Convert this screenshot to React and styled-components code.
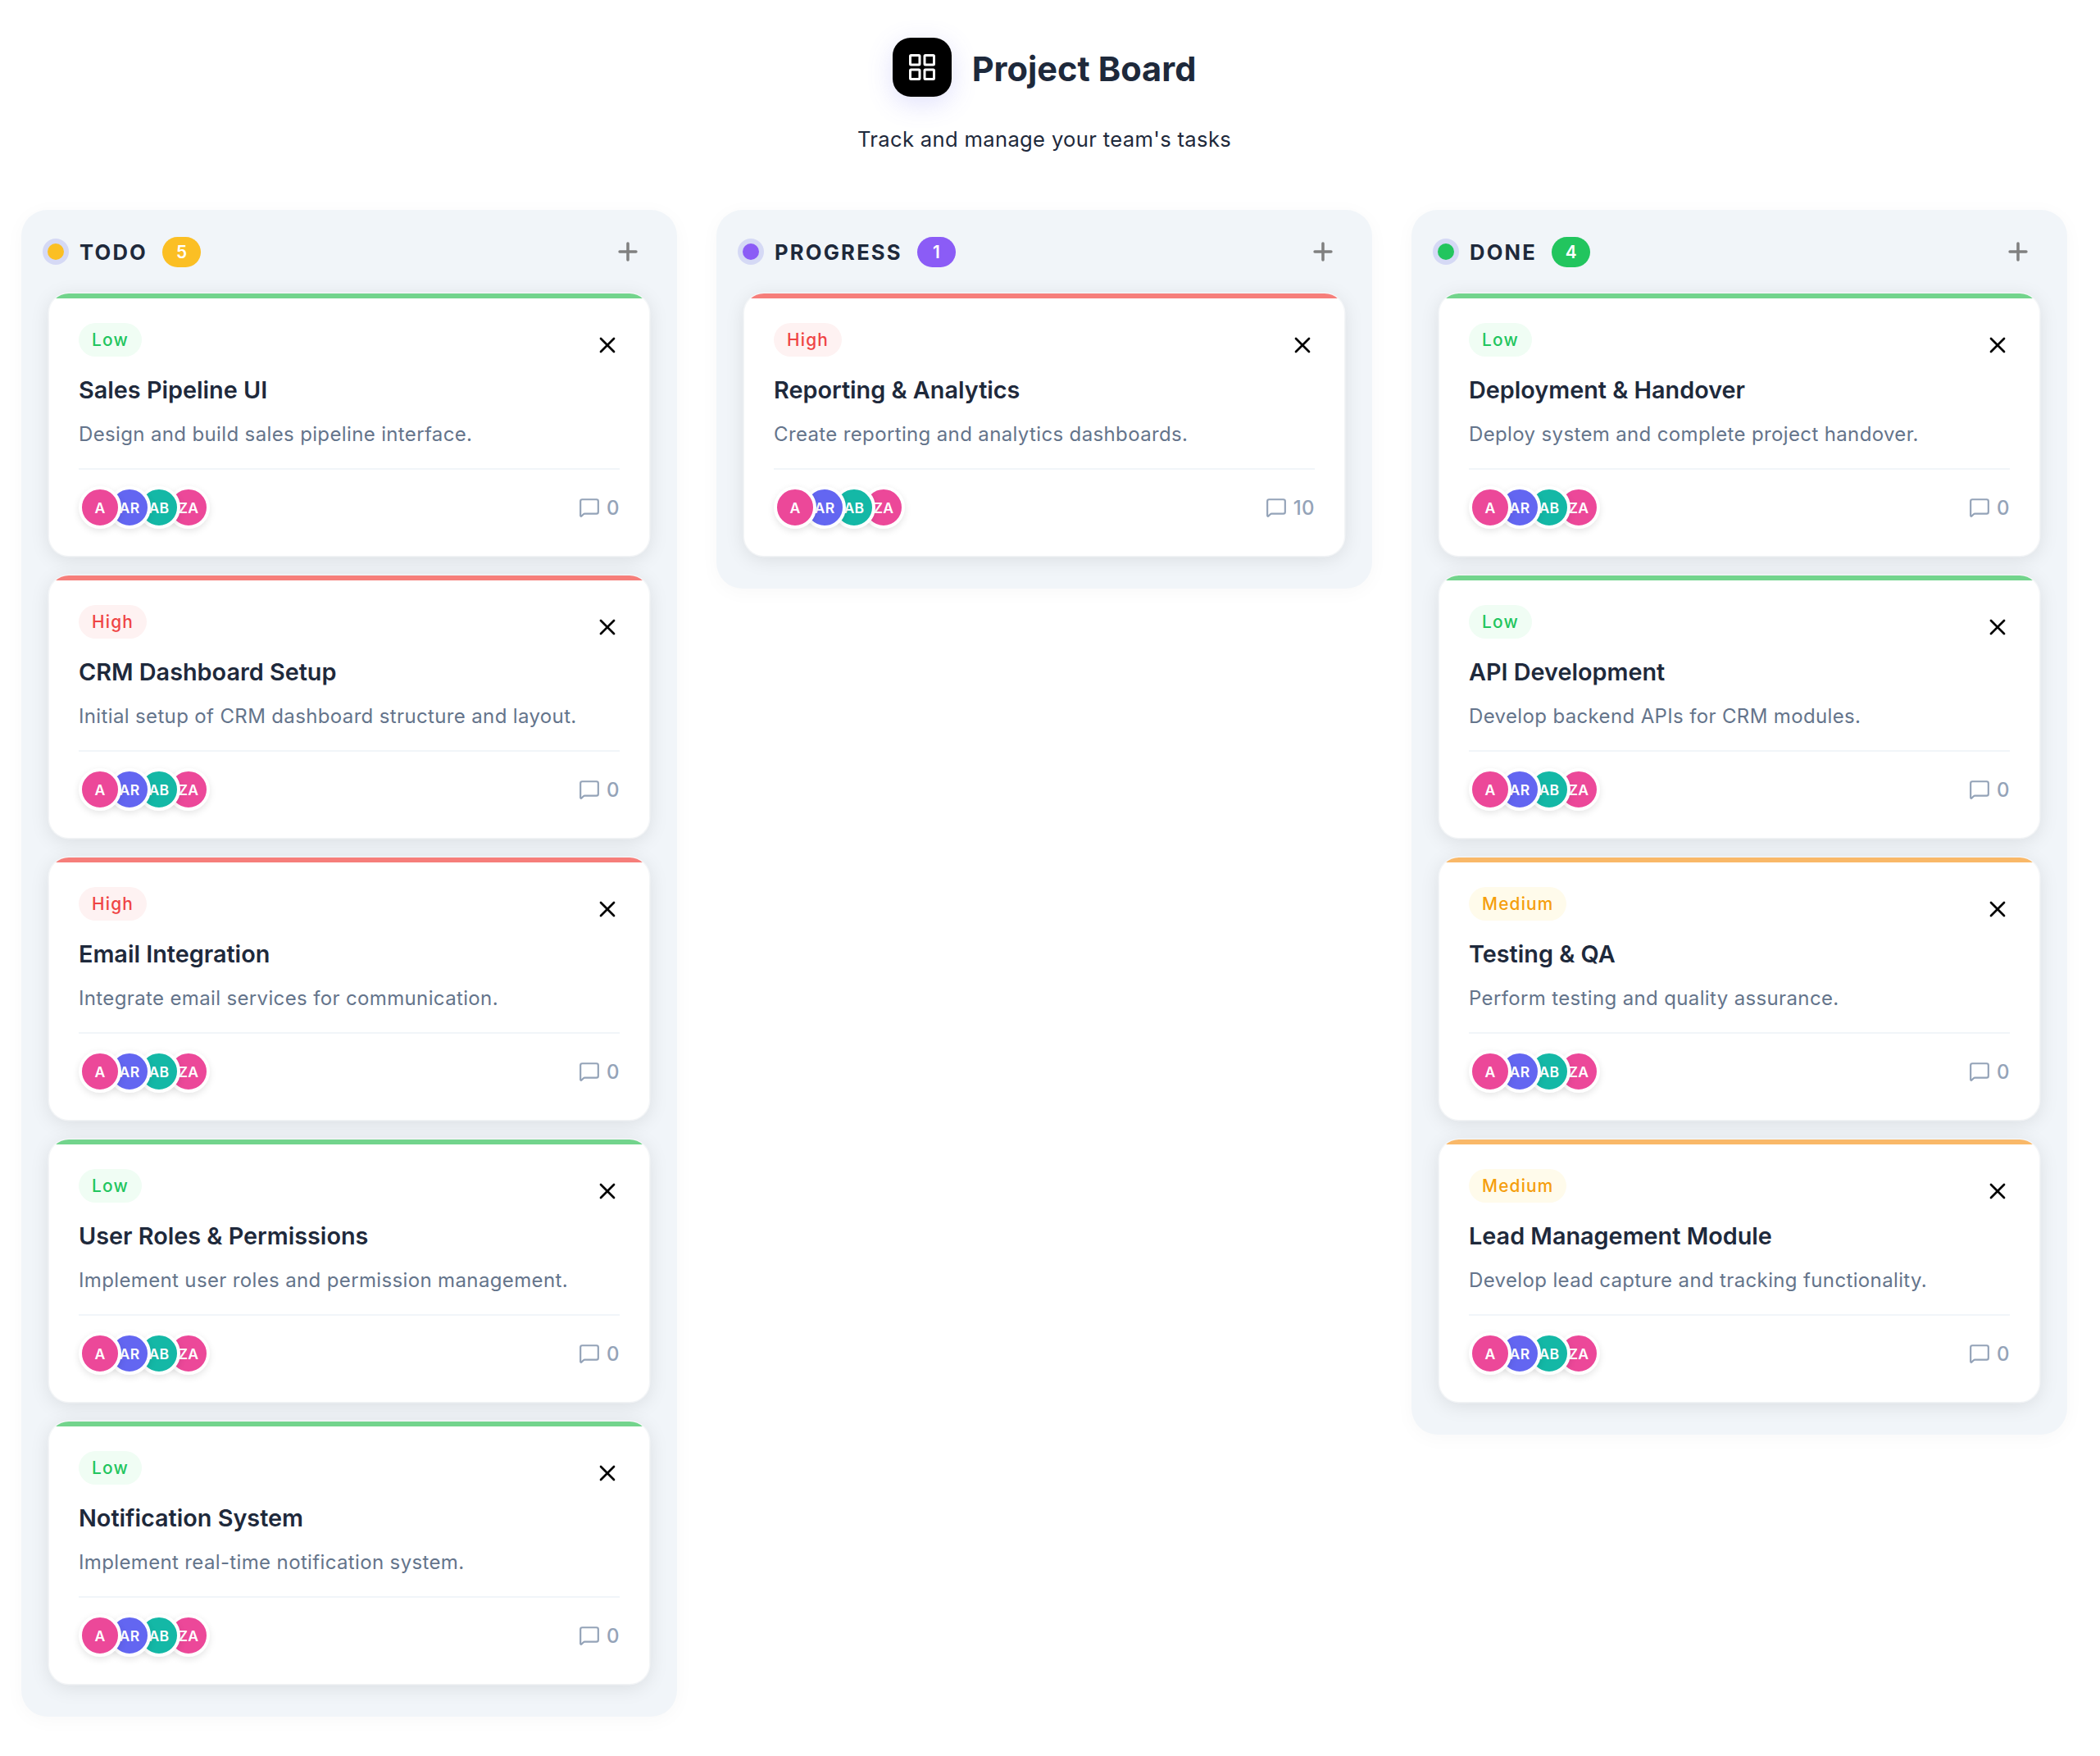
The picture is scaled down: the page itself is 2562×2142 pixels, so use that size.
import React from "react";
import styled, { createGlobalStyle } from "styled-components";
import { Plus, X, MessageSquare } from "lucide-react";

const Global = createGlobalStyle`
  html, body { margin: 0; padding: 0; background: #fff; }
  body { font-family: Inter, "Liberation Sans", sans-serif; }
`;

const Page = styled.div`
  width: 2562px;
  min-height: 2142px;
  box-sizing: border-box;
  padding: 46px 40px 0 26px;
`;

const Header = styled.header`
  display: flex;
  flex-direction: column;
  align-items: center;
  margin-bottom: 67px;
`;

const TitleRow = styled.div`
  display: flex;
  align-items: center;
  gap: 25px;
`;

const Logo = styled.div`
  width: 72px;
  height: 72px;
  border-radius: 22px;
  background: #000;
  color: #fff;
  display: flex;
  align-items: center;
  justify-content: center;
  box-shadow: 0 8px 32px rgba(99, 102, 241, 0.2);
`;

const Title = styled.h1`
  margin: 3px 0 0;
  font-size: 41.6px;
  line-height: 50px;
  font-weight: 700;
  color: #1e293b;
`;

const Subtitle = styled.p`
  margin: 33px 0 0;
  font-size: 25.6px;
  line-height: 38px;
  letter-spacing: 0.33px;
  color: #1e293b;
`;

const Board = styled.main`
  display: grid;
  grid-template-columns: repeat(3, 800px);
  gap: 48px;
  align-items: start;
`;

const Column = styled.section`
  background: #f1f5f9;
  border-radius: 32px;
  padding: 32px 34px 40px;
  box-shadow: 0 4px 24px rgba(0, 0, 0, 0.03);
`;

const ColumnHeader = styled.div`
  display: flex;
  align-items: center;
  height: 38px;
  margin-bottom: 32px;
  margin-left: -8px;
`;

const Dot = styled.span`
  width: 20px;
  height: 20px;
  border-radius: 50%;
  background: ${(p) => p.$color};
  box-shadow: 0 0 0 6px #d5d9f5;
  margin-left: 6px;
`;

const ColumnName = styled.h2`
  margin: 0 18px 0 19px;
  font-size: 25.6px;
  font-weight: 700;
  letter-spacing: 2.2px;
  color: #1e293b;
`;

const Count = styled.span`
  min-width: 47px;
  height: 37px;
  box-sizing: border-box;
  padding: 0 16px;
  border-radius: 19px;
  background: ${(p) => p.$color};
  color: #fff;
  font-size: 20.8px;
  font-weight: 600;
  display: flex;
  align-items: center;
  justify-content: center;
`;

const AddButton = styled.button`
  margin-left: auto;
  margin-right: 9px;
  padding: 0;
  width: 34px;
  height: 34px;
  border: 0;
  background: none;
  color: #808080;
  display: flex;
`;

const Cards = styled.div`
  display: flex;
  flex-direction: column;
  gap: 24px;
`;

const Card = styled.article`
  position: relative;
  overflow: hidden;
  height: 320px;
  box-sizing: border-box;
  background: #fff;
  border-radius: 24px;
  padding: 36px 36px 0;
  box-shadow: 0 0 0 1.5px rgba(255, 255, 255, 0.5), 0 4px 24px rgba(0, 0, 0, 0.1);
  display: flex;
  flex-direction: column;
  &::before {
    content: "";
    position: absolute;
    top: 0;
    left: 0;
    right: 0;
    height: 6px;
    background: ${(p) => p.$accent};
  }
`;

const CardTop = styled.div`
  display: flex;
  justify-content: space-between;
  align-items: flex-start;
  height: 43px;
`;

const Priority = styled.span`
  height: 41px;
  box-sizing: border-box;
  padding: 0 16px;
  border-radius: 21px;
  background: ${(p) => p.$bg};
  color: ${(p) => p.$color};
  font-size: 20.8px;
  font-weight: 500;
  letter-spacing: 1.2px;
  display: flex;
  align-items: center;
`;

const CloseButton = styled.button`
  margin: 11px -1px 0 0;
  padding: 0;
  width: 32px;
  height: 32px;
  border: 0;
  background: none;
  color: #000;
  display: flex;
`;

const CardTitle = styled.h3`
  margin: 21px 0 0;
  font-size: 28.8px;
  line-height: 36px;
  font-weight: 600;
  color: #1e293b;
`;

const CardText = styled.p`
  margin: 18px 0 0;
  font-size: 24px;
  line-height: 36px;
  letter-spacing: 0.36px;
  color: #64748b;
`;

const CardFooter = styled.div`
  margin-top: 23px;
  padding-top: 20px;
  border-top: 2px solid #f1f5f9;
  display: flex;
  align-items: center;
  justify-content: space-between;
`;

const Avatars = styled.div`
  display: flex;
`;

const Avatar = styled.span`
  width: 44px;
  height: 44px;
  border: 4px solid #fff;
  border-radius: 50%;
  background: ${(p) => p.$color};
  color: #fff;
  font-size: 17.6px;
  font-weight: 600;
  letter-spacing: 0.4px;
  display: flex;
  align-items: center;
  justify-content: center;
  box-shadow: 0 3px 8px rgba(0, 0, 0, 0.1);
  position: relative;
  z-index: ${(p) => p.$z};
  & + & { margin-left: -16px; }
`;

const Comments = styled.div`
  display: flex;
  align-items: center;
  gap: 8px;
  color: #94a3b8;
  font-size: 24px;
  font-weight: 500;
  letter-spacing: 0.4px;
`;

const people = [
  ["A", "#ec4899"],
  ["AR", "#6366f1"],
  ["AB", "#14b8a6"],
  ["ZA", "#ec4899"],
];

const levels = {
  Low: { accent: "#72d48c", bg: "#f0fdf4", color: "#22c55e" },
  High: { accent: "#f67e7a", bg: "#fef2f2", color: "#ef4444" },
  Medium: { accent: "#f9b868", bg: "#fffbeb", color: "#f59e0b" },
};

const columns = [
  {
    name: "TODO",
    color: "#fbbf24",
    tasks: [
      ["Low", "Sales Pipeline UI", "Design and build sales pipeline interface.", 0],
      ["High", "CRM Dashboard Setup", "Initial setup of CRM dashboard structure and layout.", 0],
      ["High", "Email Integration", "Integrate email services for communication.", 0],
      ["Low", "User Roles & Permissions", "Implement user roles and permission management.", 0],
      ["Low", "Notification System", "Implement real-time notification system.", 0],
    ],
  },
  {
    name: "PROGRESS",
    color: "#8b5cf6",
    tasks: [["High", "Reporting & Analytics", "Create reporting and analytics dashboards.", 10]],
  },
  {
    name: "DONE",
    color: "#22c55e",
    tasks: [
      ["Low", "Deployment & Handover", "Deploy system and complete project handover.", 0],
      ["Low", "API Development", "Develop backend APIs for CRM modules.", 0],
      ["Medium", "Testing & QA", "Perform testing and quality assurance.", 0],
      ["Medium", "Lead Management Module", "Develop lead capture and tracking functionality.", 0],
    ],
  },
];

function BoardIcon() {
  const cells = [1.5, 19];
  return (
    <svg width="32" height="32" viewBox="0 0 32 32" fill="none" stroke="currentColor" strokeWidth="3">
      {cells.map((y) =>
        cells.map((x) => <rect key={`${x}-${y}`} x={x} y={y} width="11.5" height="11.5" rx="1" />)
      )}
    </svg>
  );
}

function Task({ level, title, text, comments }) {
  const l = levels[level];
  return (
    <Card $accent={l.accent}>
      <CardTop>
        <Priority $bg={l.bg} $color={l.color}>{level}</Priority>
        <CloseButton aria-label="Delete"><X size={32} /></CloseButton>
      </CardTop>
      <CardTitle>{title}</CardTitle>
      <CardText>{text}</CardText>
      <CardFooter>
        <Avatars>
          {people.map(([n, c], i) => (
            <Avatar key={n} $color={c} $z={4 - i}>{n}</Avatar>
          ))}
        </Avatars>
        <Comments>
          <MessageSquare size={26} />
          {comments}
        </Comments>
      </CardFooter>
    </Card>
  );
}

export default function App() {
  return (
    <Page>
      <Global />
      <Header>
        <TitleRow>
          <Logo><BoardIcon /></Logo>
          <Title>Project Board</Title>
        </TitleRow>
        <Subtitle>Track and manage your team's tasks</Subtitle>
      </Header>
      <Board>
        {columns.map((c) => (
          <Column key={c.name}>
            <ColumnHeader>
              <Dot $color={c.color} />
              <ColumnName>{c.name}</ColumnName>
              <Count $color={c.color}>{c.tasks.length}</Count>
              <AddButton aria-label="Add"><Plus size={34} strokeWidth={2.5} /></AddButton>
            </ColumnHeader>
            <Cards>
              {c.tasks.map((t) => (
                <Task key={t[1]} level={t[0]} title={t[1]} text={t[2]} comments={t[3]} />
              ))}
            </Cards>
          </Column>
        ))}
      </Board>
    </Page>
  );
}
